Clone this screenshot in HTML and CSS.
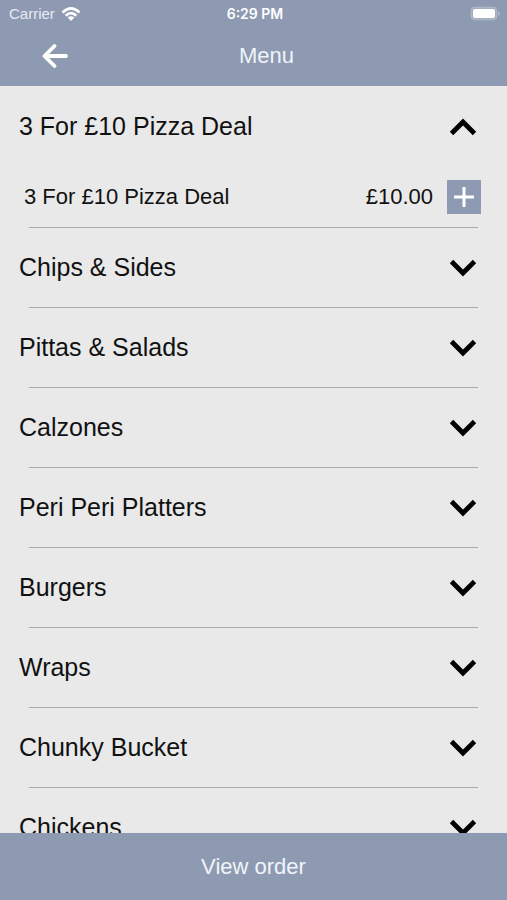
FILE: index.html
```
<!DOCTYPE html>
<html lang="en">
<head>
    <meta charset="UTF-8">
    <meta name="viewport" content="width=device-width, initial-scale=1">
    <title>Menu</title>
    <link rel="stylesheet" href="styles.css">
</head>
<body>
    <svg class="symbols" aria-hidden="true">
        <symbol id="chevron" viewBox="0 0 28 18">
            <path d="M2.500 2.500 L14 14 L25.500 2.500" fill="none" stroke="currentColor" stroke-width="4.800"/>
        </symbol>
    </svg>

    <header class="header">
        <div class="status">
            <div class="carrier">
                <span>Carrier</span>
                <svg class="wifi" viewBox="0 0 20 16" aria-hidden="true">
                    <g fill="none" stroke="currentColor" stroke-width="2.600">
                        <path d="M1.500 6.500 Q10 -1.800 18.500 6.500"/>
                        <path d="M4.700 9.700 Q10 4.600 15.300 9.700"/>
                    </g>
                    <path d="M6.700 11.600 Q10 8.700 13.300 11.600 L10 15 Z" fill="currentColor"/>
                </svg>
            </div>
            <span class="time">6:29 PM</span>
            <svg class="battery" viewBox="0 0 31 15" aria-hidden="true">
                <rect x="1" y="1" width="26" height="13" rx="4" fill="#fff" fill-opacity="0.200" stroke="#fff" stroke-opacity="0.200"/>
                <rect x="3" y="3" width="22" height="9" rx="2" fill="#fff"/>
                <path d="M28.500 5 Q31 7.500 28.500 10 Z" fill="#fff" fill-opacity="0.500"/>
            </svg>
        </div>
        <div class="navbar">
            <button class="back" type="button" aria-label="Back">
                <svg viewBox="0 0 26 24" aria-hidden="true">
                    <path d="M12.500 2 L2.500 12 L12.500 22 M3 12 H24" fill="none" stroke="currentColor" stroke-width="3.800" stroke-linecap="round" stroke-linejoin="round"/>
                </svg>
            </button>
            <h1 class="title">Menu</h1>
        </div>
    </header>

    <main class="menu">
        <section class="category">
            <button class="toggle" type="button" aria-expanded="true">3 For £10 Pizza Deal <svg class="chevron chevron-up"><use href="#chevron"/></svg></button>
            <div class="item">
                <span class="item-name">3 For £10 Pizza Deal</span>
                <span class="price">£10.00</span>
                <button class="add" type="button" aria-label="Add 3 For £10 Pizza Deal">
                    <svg viewBox="0 0 20 20" aria-hidden="true"><path d="M10 0 V20 M0 10 H20" stroke="currentColor" stroke-width="3"/></svg>
                </button>
            </div>
        </section>
        <section class="category">
            <button class="toggle" type="button" aria-expanded="false">Chips &amp; Sides <svg class="chevron"><use href="#chevron"/></svg></button>
        </section>
        <section class="category">
            <button class="toggle" type="button" aria-expanded="false">Pittas &amp; Salads <svg class="chevron"><use href="#chevron"/></svg></button>
        </section>
        <section class="category">
            <button class="toggle" type="button" aria-expanded="false">Calzones <svg class="chevron"><use href="#chevron"/></svg></button>
        </section>
        <section class="category">
            <button class="toggle" type="button" aria-expanded="false">Peri Peri Platters <svg class="chevron"><use href="#chevron"/></svg></button>
        </section>
        <section class="category">
            <button class="toggle" type="button" aria-expanded="false">Burgers <svg class="chevron"><use href="#chevron"/></svg></button>
        </section>
        <section class="category">
            <button class="toggle" type="button" aria-expanded="false">Wraps <svg class="chevron"><use href="#chevron"/></svg></button>
        </section>
        <section class="category">
            <button class="toggle" type="button" aria-expanded="false">Chunky Bucket <svg class="chevron"><use href="#chevron"/></svg></button>
        </section>
        <section class="category">
            <button class="toggle" type="button" aria-expanded="false">Chickens <svg class="chevron"><use href="#chevron"/></svg></button>
        </section>
    </main>

    <button class="view-order" type="button">View order</button>
</body>
</html>
```
FILE: styles.css
```
* { box-sizing: border-box; }
body {
    display: flex;
    flex-direction: column;
    height: 100vh;
    margin: 0;
    background: #e9e9e9;
    color: #111;
    font-family: "Liberation Sans", Arial, sans-serif;
}
button { border: 0; padding: 0; background: none; color: inherit; font: inherit; cursor: pointer; }
svg { display: block; }
.symbols { display: none; }

/* status bar and title */
.header { flex: none; background: #8e9ab1; color: #fff; }
.status {
    display: grid;
    grid-template-columns: 1fr auto 1fr;
    align-items: center;
    height: 27px;
    padding: 0 6px 0 9px;
}
.carrier { display: flex; align-items: center; gap: 6px; color: #e6ebf3; font-size: 15px; }
.wifi { width: 20px; height: 16px; color: #fff; }
.time { font: 600 14px Inter, "Liberation Sans", sans-serif; }
.battery { width: 31px; height: 15px; justify-self: end; }
.navbar {
    display: grid;
    grid-template-columns: 1fr auto 1fr;
    align-items: center;
    height: 59px;
    padding: 0 16px 2px 42px;
}
.back { justify-self: start; }
.back svg { width: 26px; height: 24px; }
.title { margin: 0; font-size: 22px; font-weight: 400; color: #f0f4fa; }

/* category list */
.menu { flex: 1; min-height: 0; padding-top: 1px; overflow: hidden; }
.category::after { content: ""; display: block; height: 1px; margin: 0 29px; background: #aaa; }
.toggle {
    display: flex;
    align-items: center;
    justify-content: space-between;
    width: 100%;
    height: 79px;
    padding: 0 30px 0 19px;
    font-size: 25px;
    text-align: left;
}
.chevron { width: 28px; height: 18px; color: #000; }
.chevron-up { transform: rotate(180deg); }
.item { display: flex; align-items: center; height: 61px; padding: 0 26px 0 24px; font-size: 22px; }
.item-name { flex: 1; }
.price { margin-right: 14px; }
.add {
    display: flex;
    align-items: center;
    justify-content: center;
    width: 34px;
    height: 34px;
    background: #8e9ab1;
    color: #fff;
}
.add svg { width: 20px; height: 20px; }

.view-order { flex: none; height: 67px; background: #8e9ab1; color: #f0f4fa; font-size: 22px; }
```
